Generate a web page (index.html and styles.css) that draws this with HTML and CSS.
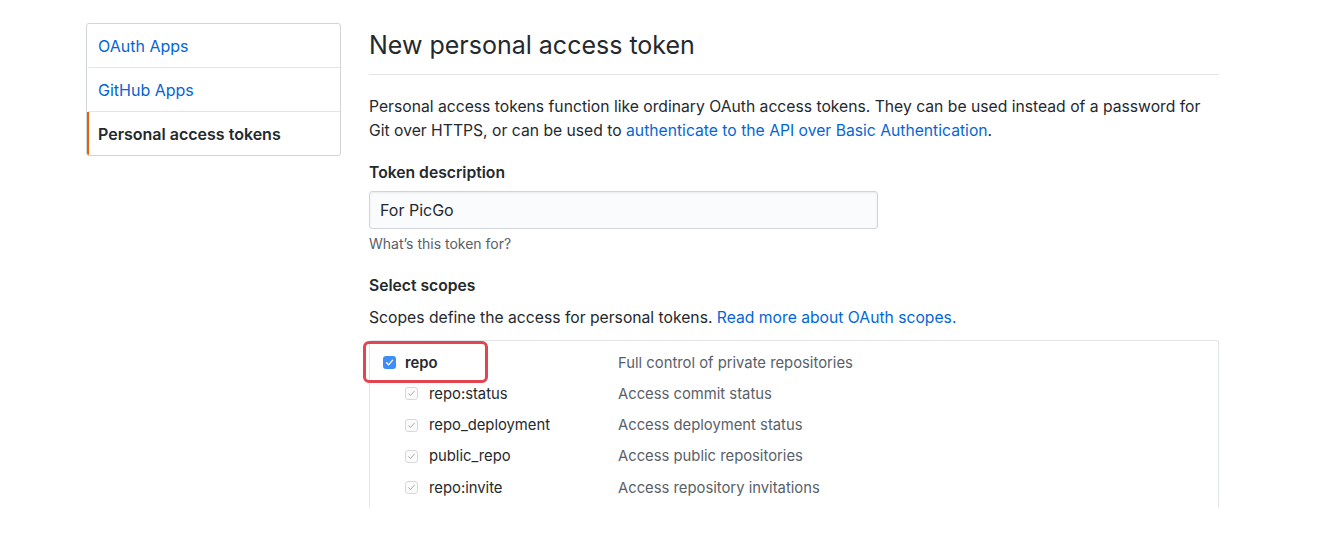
FILE: index.html
```html
<!DOCTYPE html>
<html lang="en">
<head>
<meta charset="utf-8">
<title>New personal access token</title>
<link rel="stylesheet" href="styles.css">
</head>
<body>
<div class="layout">
  <nav class="menu">
    <a class="menu-item" href="#">OAuth Apps</a>
    <a class="menu-item" href="#">GitHub Apps</a>
    <a class="menu-item selected" href="#">Personal access tokens</a>
  </nav>
  <main class="main">
    <div class="subhead">
      <h2 class="subhead-heading">New personal access token</h2>
    </div>
    <p class="intro">Personal access tokens function like ordinary OAuth access tokens. They can be used instead of a password for Git over HTTPS, or can be used to <a href="#">authenticate to the API over Basic Authentication</a>.</p>
    <div class="form-group">
      <label class="label">Token description</label>
      <input class="input" type="text" value="For PicGo">
      <p class="note">What’s this token for?</p>
    </div>
    <div class="form-group scopes-group">
      <label class="label">Select scopes</label>
      <p class="scopes-intro">Scopes define the access for personal tokens. <a href="#">Read more about OAuth scopes.</a></p>
      <div class="scopes">
        <div class="highlight"></div>
        <div class="scope-row top">
          <span class="scope-label"><span class="check-main"><svg width="13" height="13" viewBox="0 0 13 13"><rect x="0" y="0" width="13" height="13" rx="3" fill="#3e8ef7"/><path d="M3.6 6.8 L5.6 8.9 L9.6 4.2" fill="none" stroke="#fff" stroke-width="1.3" stroke-linecap="round" stroke-linejoin="round"/></svg></span><span class="name main-name">repo</span></span>
          <span class="desc">Full control of private repositories</span>
        </div>
        <div class="scope-row sub">
          <span class="scope-label"><span class="check-sub"><svg width="13" height="13" viewBox="0 0 13 13"><rect x="0.5" y="0.5" width="12" height="12" rx="2.5" fill="#fbfbfb" stroke="#d8d8d8"/><path d="M3.7 6.7 L5.5 8.6 L9.3 4.2" fill="none" stroke="#a8a8a8" stroke-width="1" stroke-linecap="round" stroke-linejoin="round"/></svg></span><span class="name">repo:status</span></span>
          <span class="desc">Access commit status</span>
        </div>
        <div class="scope-row sub">
          <span class="scope-label"><span class="check-sub"><svg width="13" height="13" viewBox="0 0 13 13"><rect x="0.5" y="0.5" width="12" height="12" rx="2.5" fill="#fbfbfb" stroke="#d8d8d8"/><path d="M3.7 6.7 L5.5 8.6 L9.3 4.2" fill="none" stroke="#a8a8a8" stroke-width="1" stroke-linecap="round" stroke-linejoin="round"/></svg></span><span class="name">repo_deployment</span></span>
          <span class="desc">Access deployment status</span>
        </div>
        <div class="scope-row sub">
          <span class="scope-label"><span class="check-sub"><svg width="13" height="13" viewBox="0 0 13 13"><rect x="0.5" y="0.5" width="12" height="12" rx="2.5" fill="#fbfbfb" stroke="#d8d8d8"/><path d="M3.7 6.7 L5.5 8.6 L9.3 4.2" fill="none" stroke="#a8a8a8" stroke-width="1" stroke-linecap="round" stroke-linejoin="round"/></svg></span><span class="name">public_repo</span></span>
          <span class="desc">Access public repositories</span>
        </div>
        <div class="scope-row sub">
          <span class="scope-label"><span class="check-sub"><svg width="13" height="13" viewBox="0 0 13 13"><rect x="0.5" y="0.5" width="12" height="12" rx="2.5" fill="#fbfbfb" stroke="#d8d8d8"/><path d="M3.7 6.7 L5.5 8.6 L9.3 4.2" fill="none" stroke="#a8a8a8" stroke-width="1" stroke-linecap="round" stroke-linejoin="round"/></svg></span><span class="name">repo:invite</span></span>
          <span class="desc">Access repository invitations</span>
        </div>
      </div>
    </div>
  </main>
</div>
</body>
</html>
```
FILE: styles.css
```css
* { box-sizing: border-box; }
html, body {
  margin: 0;
  padding: 0;
  background: #fff;
  height: 536px;
  overflow: hidden;
}
body {
  font-family: Inter, "Liberation Sans", Arial, sans-serif;
  font-size: 15.7px;
  line-height: 1.5;
  color: #24292e;
}
a { color: #0366d6; text-decoration: none; }

.layout {
  display: flex;
  align-items: flex-start;
  gap: 28px;
  padding: 23px 0 0 86px;
}

.menu {
  width: 255px;
  flex: none;
  display: flex;
  flex-direction: column;
  border: 1px solid #d1d5da;
  border-radius: 3px;
  overflow: hidden;
}
.menu-item {
  display: block;
  height: 44px;
  line-height: 44px;
  padding-left: 9px;
  border-left: 2px solid transparent;
  border-bottom: 1px solid #e1e4e8;
  font-size: 16px;
}
.menu-item:last-child { border-bottom: none; height: 43px; }
.menu-item.selected {
  border-left-color: #e36209;
  color: #24292e;
  font-weight: 600;
}

.main {
  width: 850px;
  flex: none;
}
.subhead {
  padding-top: 6px;
  padding-bottom: 13px;
  border-bottom: 1px solid #e1e4e8;
}
.subhead-heading {
  margin: 0;
  font-size: 25px;
  font-weight: normal;
  line-height: 32px;
}
.intro {
  margin: 20px 0 0;
  line-height: 24px;
}

.form-group { display: flex; flex-direction: column; align-items: flex-start; }
.label {
  margin-top: 18px;
  font-weight: 600;
  line-height: 24px;
}
.input {
  margin-top: 6px;
  width: 509px;
  height: 38px;
  padding: 0 10px;
  font: inherit;
  font-size: 16px;
  color: #24292e;
  background: #fafbfc;
  border: 1px solid #d1d5da;
  border-radius: 3px;
  box-shadow: inset 0 1px 2px rgba(27,31,35,0.075);
}
.note {
  margin: 6px 0 0;
  font-size: 14px;
  line-height: 18px;
  color: #586069;
}
.scopes-group .label { margin-top: 21px; }
.scopes-intro {
  margin: 8px 0 0;
  line-height: 24px;
}

.scopes {
  position: relative;
  align-self: stretch;
  margin-top: 10px;
  height: 168px;
  padding-top: 6px;
  border: 1px solid #e1e4e8;
  border-bottom: none;
  border-radius: 3px 3px 0 0;
  font-size: 14.8px;
}
.highlight {
  position: absolute;
  left: -7px;
  top: 0;
  width: 125px;
  height: 42px;
  border: 3px solid #e2454f;
  border-radius: 6px;
}
.scope-row {
  display: grid;
  grid-template-columns: 248px 1fr;
  height: 31.3px;
  align-items: center;
}
.scope-label {
  display: flex;
  align-items: center;
}
.scope-row.top .scope-label { padding-left: 13px; }
.scope-row.sub .scope-label { padding-left: 35px; }
.check-main, .check-sub { display: flex; }
.check-main { margin-right: 9px; }
.check-sub { margin-right: 11px; }
.check-main svg, .check-sub svg { display: block; }
.name { color: #24292e; }
.main-name { font-weight: 600; }
.desc { color: #586069; }
```
